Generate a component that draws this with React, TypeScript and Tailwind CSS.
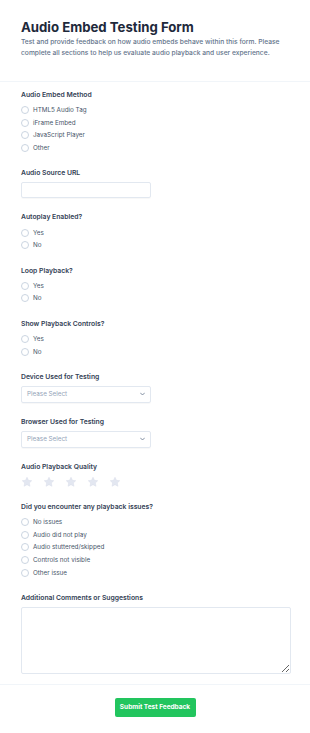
import React from "react";

function Label({ children }: { children: React.ReactNode }) {
  return (
    <div className="text-[6.8px] leading-[10px] font-semibold text-[#334155] mb-[4px]">
      {children}
    </div>
  );
}

function Radio({ label }: { label: string }) {
  return (
    <div className="flex items-center gap-[4px] h-[12.6px]">
      <span className="w-[8px] h-[8px] rounded-full border border-[#cbd5e1] bg-white shrink-0" />
      <span className="text-[6.3px] leading-[10px] text-[#475569]">{label}</span>
    </div>
  );
}

function RadioGroup({ label, options }: { label: string; options: string[] }) {
  return (
    <div>
      <Label>{label}</Label>
      <div className="flex flex-col">
        {options.map((o) => (
          <Radio key={o} label={o} />
        ))}
      </div>
    </div>
  );
}

function SelectBox({ label }: { label: string }) {
  return (
    <div>
      <Label>{label}</Label>
      <div className="w-[130px] h-[17px] border border-[#e2e8f0] rounded-[2px] flex items-center justify-between px-[5px] shadow-[0_1px_1px_rgba(0,0,0,0.03)]">
        <span className="text-[6.3px] text-[#94a3b8]">Please Select</span>
        <svg width="5" height="4" viewBox="0 0 10 6" fill="none">
          <path d="M1 1l4 4 4-4" stroke="#64748b" strokeWidth="1.6" strokeLinecap="round" strokeLinejoin="round" />
        </svg>
      </div>
    </div>
  );
}

function Star() {
  return (
    <svg width="12" height="12" viewBox="0 0 24 24">
      <path
        d="M12 2.5l2.9 6.1 6.6.8-4.9 4.6 1.3 6.6L12 17.3l-5.9 3.3 1.3-6.6-4.9-4.6 6.6-.8z"
        fill="#e3e7f1"
        stroke="#d8dde9"
        strokeWidth="1"
        strokeLinejoin="round"
      />
    </svg>
  );
}

export default function App() {
  return (
    <div className="w-[310px] min-h-[733px] bg-white font-['Inter',sans-serif] flex flex-col">
      <header className="px-[21px] pt-[18px] pb-[22px] border-b border-[#f1f5f9]">
        <h1 className="text-[13.2px] leading-[18px] font-bold text-[#1e293b]">
          Audio Embed Testing Form
        </h1>
        <p className="mt-[1px] text-[6.7px] leading-[11px] font-medium text-[#64748b]">
          Test and provide feedback on how audio embeds behave within this form. Please complete all sections to help us evaluate audio playback and user experience.
        </p>
      </header>

      <div className="px-[21px] pt-[8px] pb-[10px] flex flex-col gap-[14px]">
        <RadioGroup
          label="Audio Embed Method"
          options={["HTML5 Audio Tag", "iFrame Embed", "JavaScript Player", "Other"]}
        />
        <div>
          <Label>Audio Source URL</Label>
          <div className="w-[130px] h-[16px] border border-[#e2e8f0] rounded-[2px] shadow-[0_1px_1px_rgba(0,0,0,0.03)]" />
        </div>
        <RadioGroup label="Autoplay Enabled?" options={["Yes", "No"]} />
        <RadioGroup label="Loop Playback?" options={["Yes", "No"]} />
        <RadioGroup label="Show Playback Controls?" options={["Yes", "No"]} />
        <SelectBox label="Device Used for Testing" />
        <SelectBox label="Browser Used for Testing" />
        <div>
          <Label>Audio Playback Quality</Label>
          <div className="flex gap-[10px]">
            <Star />
            <Star />
            <Star />
            <Star />
            <Star />
          </div>
        </div>
        <RadioGroup
          label="Did you encounter any playback issues?"
          options={["No issues", "Audio did not play", "Audio stuttered/skipped", "Controls not visible", "Other issue"]}
        />
        <div>
          <Label>Additional Comments or Suggestions</Label>
          <textarea className="block w-[270px] h-[67px] border border-[#e2e8f0] rounded-[2px] outline-none" />
        </div>
      </div>

      <footer className="border-t border-[#f1f5f9] flex justify-center pt-[13px] pb-[17px]">
        <button className="w-[81px] h-[19px] rounded-[2px] bg-[#22c55e] text-white text-[6.5px] font-bold">
          Submit Test Feedback
        </button>
      </footer>
    </div>
  );
}
